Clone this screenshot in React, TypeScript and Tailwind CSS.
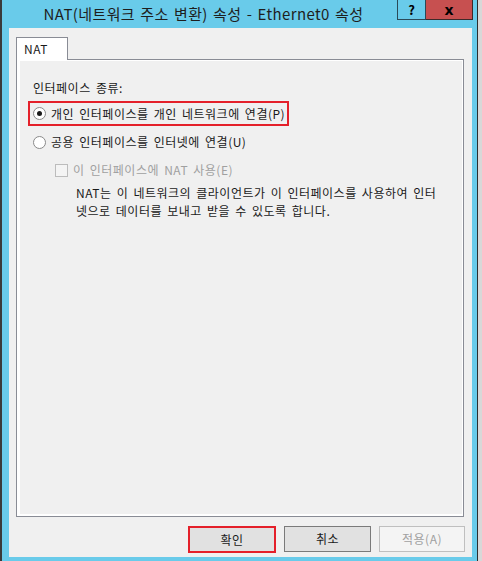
import React from "react";

const KR = { fontFamily: '"Noto Sans CJK KR", "Noto Sans", sans-serif' };

function Radio({ checked }: { checked?: boolean }) {
  return (
    <div className="w-[13px] h-[13px] rounded-full border border-[#8a8a8a] bg-white flex items-center justify-center shrink-0">
      {checked && <div className="w-[5px] h-[5px] rounded-full bg-[#1a1a1a]" />}
    </div>
  );
}

export default function App() {
  return (
    <div className="w-[482px] h-[561px] flex bg-[#2d2d2d] overflow-hidden" style={KR}>
      <div className="w-[2px] h-full bg-[#3a3a3a]" />
      <div className="w-[475px] h-full bg-[#69cbea] flex flex-col">
        {/* title bar */}
        <div className="h-[28px] flex items-start shrink-0">
          <div className="flex-1 h-[27px] flex items-center justify-center pl-[8px] text-[15px] text-[#1e1e1e] leading-none tracking-[0.4px] [word-spacing:1.5px]">
            NAT(네트워크 주소 변환) 속성 - Ethernet0 속성
          </div>
          <div className="w-[29px] h-[20px] border border-[#2a4a58] border-t-0 flex items-center justify-center text-[13px] font-bold text-black leading-none">
            ?
          </div>
          <div className="w-[47px] h-[20px] bg-[#c75050] border border-[#3d2a2a] border-t-0 border-l-0 flex items-center justify-center text-[14px] font-bold text-black leading-none" style={{ fontFamily: '"DejaVu Sans", sans-serif' }}>
            x
          </div>
          <div className="w-[4px]" />
        </div>
        {/* client area */}
        <div className="ml-[7px] mr-[5px] h-[529px] bg-[#f0f0f0] flex flex-col pt-[9px] px-[7px]">
          <div className="h-[22px] flex relative z-10">
            <div className="w-[52px] h-[23px] bg-white border border-[#898c95] border-b-0 pl-[7px] pt-[3px] text-[12px] leading-[16px] text-[#1a1a1a] tracking-[0.5px]">
              NAT
            </div>
          </div>
          <div className="w-[448px] h-[458px] border border-[#898c95] bg-white pl-[3px] pt-[1px] pr-[1px] pb-[2px]">
            <div className="w-full h-full bg-[#f0f0f0] flex flex-col text-[12px] text-[#1a1a1a] tracking-[0.5px] [word-spacing:2px]">
              <div className="mt-[19px] pl-[13px] leading-[16px]">인터페이스 종류:</div>
              <div className="mt-[5px] ml-[8px] w-[261px] h-[25px] border-2 border-[#e4202a] flex items-center pl-[3px] gap-[5px]">
                <Radio checked />
                <span className="leading-[16px]">개인 인터페이스를 개인 네트워크에 연결(P)</span>
              </div>
              <div className="mt-[8px] pl-[13px] h-[16px] flex items-center gap-[5px]">
                <Radio />
                <span className="leading-[16px]">공용 인터페이스를 인터넷에 연결(U)</span>
              </div>
              <div className="mt-[12px] pl-[35px] h-[16px] flex items-center gap-[5px] text-[#a0a0a0]">
                <div className="w-[13px] h-[13px] border border-[#bcbcbc] bg-[#f4f4f4] shrink-0" />
                <span className="leading-[16px]">이 인터페이스에 NAT 사용(E)</span>
              </div>
              <div className="mt-[6px] pl-[56px] leading-[18px]">
                <div>NAT는 이 네트워크의 클라이언트가 이 인터페이스를 사용하여 인터</div>
                <div>넷으로 데이터를 보내고 받을 수 있도록 합니다.</div>
              </div>
            </div>
          </div>
          <div className="mt-[9px] flex justify-end gap-[8px] text-[12px] tracking-[0.5px]">
            <div className="w-[88px] h-[27px] border-2 border-[#e4202a] bg-[#e1e1e1] flex items-center justify-center text-[#1a1a1a]">
              확인
            </div>
            <div className="w-[87px] h-[26px] border border-[#7a7a7a] bg-[#e1e1e1] flex items-center justify-center text-[#1a1a1a]">
              취소
            </div>
            <div className="w-[86px] h-[26px] border border-[#bfbfbf] bg-[#f4f4f4] flex items-center justify-center text-[#a0a0a0]">
              적용(A)
            </div>
          </div>
        </div>
      </div>
      <div className="w-[1px] h-full bg-[#2d2d2d]" />
      <div className="w-[4px] h-full bg-[#d8d8d8]" />
    </div>
  );
}
